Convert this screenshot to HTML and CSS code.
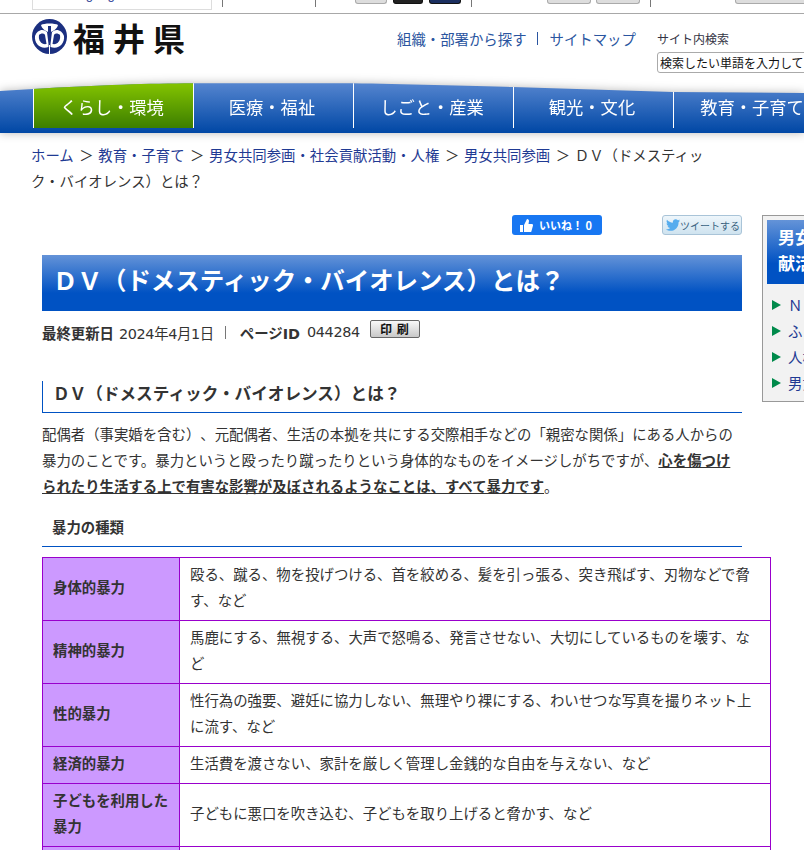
FILE: index.html
```html
<!DOCTYPE html>
<html lang="ja">
<head>
    <meta charset="UTF-8">
    <meta name="viewport" content="width=device-width, initial-scale=1.0">
    <title>DV（ドメスティック・バイオレンス）とは？</title>
    <link rel="stylesheet" href="styles.css">
</head>
<body>
    <div class="topstrip">
        <div class="strip-box"><span class="strip-text">Language</span></div>
        <span class="strip-line sl-1"></span>
        <span class="strip-line sl-2"></span>
        <span class="strip-btn sb-1"></span>
        <span class="strip-btn sb-2"></span>
        <span class="strip-btn sb-3"></span>
        <span class="strip-line sl-3"></span>
        <span class="strip-btn sb-4"></span>
        <span class="strip-btn sb-5"></span>
        <span class="strip-line sl-3"></span>
        <span class="strip-btn sb-6"></span>
    </div>

    <header>
        <a class="logo" href="#">
            <svg width="35" height="35" viewBox="0 0 35 35">
                <circle cx="17.5" cy="17.5" r="17.5" fill="#1b2f80"/>
                <path d="M3 17C5 11 11 9 15 13L16.500 25V28C9 31 2 25 3 17z" fill="#fff"/>
                <path d="M32 17C30 11 24 9 20 13L18.500 25V28C26 31 33 25 32 17z" fill="#fff"/>
                <path d="M7 16C9 14 12 14 13 16L14.500 25C10 26 6 22 7 16z" fill="#1b2f80"/>
                <path d="M28 16C26 14 23 14 22 16L20.500 25C25 26 29 22 28 16z" fill="#1b2f80"/>
                <path d="M9 6C12 4 23 4 26 6C25 10 21 12 19 13V7H16V13C14 12 10 10 9 6z" fill="#fff"/>
                <path d="M17 26h1v9h-1z" fill="#fff"/>
            </svg>
            <span class="logo-text">福井県</span>
        </a>
        <div class="head-right">
            <div class="head-links">
                <a href="#">組織・部署から探す</a>
                <span class="head-sep"></span>
                <a href="#">サイトマップ</a>
            </div>
            <div class="search">
                <label class="search-label">サイト内検索</label>
                <input class="search-input" type="text" value="検索したい単語を入力してください">
            </div>
        </div>
    </header>

    <div class="nav-wrap">
        <nav>
            <a class="nav-item active" href="#">くらし・環境</a>
            <a class="nav-item" href="#">医療・福祉</a>
            <a class="nav-item" href="#">しごと・産業</a>
            <a class="nav-item" href="#">観光・文化</a>
            <a class="nav-item" href="#">教育・子育て</a>
        </nav>
    </div>

    <div class="breadcrumb">
        <a href="#">ホーム</a><span class="crumb-sep">＞</span><a href="#">教育・子育て</a><span class="crumb-sep">＞</span><a href="#">男女共同参画・社会貢献活動・人権</a><span class="crumb-sep">＞</span><a href="#">男女共同参画</a><span class="crumb-sep">＞</span>ＤＶ（ドメスティック・バイオレンス）とは？
    </div>

    <div class="page">
        <main>
            <div class="social">
                <span class="like-btn">
                    <svg width="13" height="13" viewBox="0 0 13 13"><path d="M0 6h3v7H0zM4 6l3-6c1.500 0 2 1 2 2L8.500 5H12c1 0 1 1 1 1.500L11.500 12c0 .6-.5 1-1 1H4z" fill="#fff"/></svg>
                    いいね！ 0
                </span>
                <span class="tweet-btn">
                    <svg width="14" height="12" viewBox="0 0 24 20"><path d="M24 2.400c-.9.400-1.800.7-2.800.8 1-.6 1.800-1.600 2.200-2.700-1 .6-2 1-3.100 1.200C19.300.7 18 0 16.600 0c-2.700 0-4.900 2.200-4.900 4.900 0 .4 0 .8.100 1.100C7.700 5.800 4.100 3.900 1.700.9 1.200 1.600 1 2.500 1 3.400c0 1.700.9 3.200 2.200 4.100-.8 0-1.600-.2-2.200-.6v.1c0 2.400 1.700 4.400 3.900 4.800-.7.200-1.500.2-2.200.1.600 2 2.400 3.400 4.600 3.400-1.700 1.300-3.800 2.100-6.100 2.100-.4 0-.8 0-1.200-.1C2.200 19.200 4.800 20 7.500 20c9.100 0 14-7.500 14-14v-.6c1-.7 1.800-1.600 2.500-3z" fill="#55acee"/></svg>
                    ツイートする
                </span>
            </div>

            <h1 class="page-title">ＤＶ（ドメスティック・バイオレンス）とは？</h1>

            <div class="meta">
                <b>最終更新日</b>
                <span class="meta-num">2024年4月1日</span>
                <span class="meta-sep"></span>
                <b>ページID</b>
                <span class="meta-num meta-id">044284</span>
                <button class="print-btn">印 刷</button>
            </div>

            <h2 class="sec-title">ＤＶ（ドメスティック・バイオレンス）とは？</h2>
            <p class="lead">配偶者（事実婚を含む）、元配偶者、生活の本拠を共にする交際相手などの「親密な関係」にある人からの暴力のことです。暴力というと殴ったり蹴ったりという身体的なものをイメージしがちですが、<strong class="under">心を傷つけられたり生活する上で有害な影響が及ぼされるようなことは、すべて暴力です</strong>。</p>

            <h3 class="sub-title">暴力の種類</h3>

            <table class="dv-table">
                <tr>
                    <th>身体的暴力</th>
                    <td>殴る、蹴る、物を投げつける、首を絞める、髪を引っ張る、突き飛ばす、刃物などで脅す、など</td>
                </tr>
                <tr>
                    <th>精神的暴力</th>
                    <td>馬鹿にする、無視する、大声で怒鳴る、発言させない、大切にしているものを壊す、など</td>
                </tr>
                <tr>
                    <th>性的暴力</th>
                    <td>性行為の強要、避妊に協力しない、無理やり裸にする、わいせつな写真を撮りネット上に流す、など</td>
                </tr>
                <tr>
                    <th>経済的暴力</th>
                    <td>生活費を渡さない、家計を厳しく管理し金銭的な自由を与えない、など</td>
                </tr>
                <tr>
                    <th>子どもを利用した暴力</th>
                    <td>子どもに悪口を吹き込む、子どもを取り上げると脅かす、など</td>
                </tr>
                <tr>
                    <th>社会的暴力</th>
                    <td>友人や家族との付き合いを制限する、など</td>
                </tr>
            </table>
        </main>

        <aside>
            <h2 class="side-title">男女共同参画・社会貢献活動・人権</h2>
            <ul class="side-list">
                <li><a href="#">ＮＰＯ・ボランティア</a></li>
                <li><a href="#">ふくい県民活動</a></li>
                <li><a href="#">人権</a></li>
                <li><a href="#">男女共同参画</a></li>
            </ul>
        </aside>
    </div>
</body>
</html>
```
FILE: styles.css
```css
html {
    overflow: hidden;
}

body {
    margin: 0;
    width: 804px;
    height: 850px;
    overflow: hidden;
    background: #fff;
    color: #333;
    font-family: "Noto Sans CJK JP", "Noto Sans", sans-serif;
    font-size: 14.4px;
    text-spacing-trim: space-all;
}

a {
    color: #1f3a93;
    text-decoration: none;
}

/* top strip, only the bottom edge of it is in view */
.topstrip {
    display: flex;
    align-items: flex-start;
    height: 13px;
    padding-left: 32px;
    border-bottom: 1px solid #a8a8a8;
    overflow: hidden;
}

.strip-box {
    display: flex;
    align-items: flex-end;
    flex: 0 0 180px;
    box-sizing: border-box;
    height: 10px;
    padding-left: 31px;
    border: 1px solid #ddd;
    border-top: none;
}

.strip-text {
    margin-bottom: 6px;
    color: #1f3a93;
    font-family: "Liberation Sans", sans-serif;
    font-size: 13px;
    line-height: 16px;
}

.strip-line {
    flex: 0 0 1px;
    height: 7px;
    background: #777;
}

.sl-1 { margin-left: 10px; }
.sl-2 { margin-left: 92px; }
.sl-3 { margin-left: 10px; }

.strip-btn {
    flex: 0 0 auto;
    box-sizing: border-box;
    height: 4px;
    border: 1px solid #aaa;
    border-top: none;
    border-radius: 0 0 3px 3px;
    background: #ddd;
}

.sb-1 { width: 32px; margin-left: 39px; }
.sb-2 { width: 30px; margin-left: 6px; background: #222; border-color: #111; }
.sb-3 { width: 32px; margin-left: 6px; background: #1b2f60; border-color: #111; }
.sb-4 { width: 44px; margin-left: 75px; }
.sb-5 { width: 44px; margin-left: 5px; }
.sb-6 { width: 80px; margin-left: 84px; }

header {
    height: 69px;
    display: flex;
    justify-content: space-between;
    padding-left: 32px;
}

.logo {
    display: flex;
    align-items: flex-start;
    padding-top: 5px;
    gap: 6px;
    color: #111;
}

.logo-text {
    font-size: 32px;
    line-height: 36px;
    font-weight: 700;
    letter-spacing: 8px;
    color: #111;
}

.head-right {
    display: flex;
    flex: 0 0 407px;
    padding-top: 15px;
    gap: 21px;
}

.head-links {
    display: flex;
    align-items: flex-start;
    gap: 11px;
    line-height: 19px;
    white-space: nowrap;
}

.head-links a {
    color: #2a55a0;
}

.head-sep {
    width: 1px;
    height: 13px;
    margin: 3px 1px 0 -1px;
    background: #2a55a0;
}

.search {
    flex: 0 0 146px;
    min-width: 0;
}

.search-label {
    display: block;
    color: #334;
    font-size: 12px;
    line-height: 20px;
}

.search-input {
    display: block;
    width: 200px;
    height: 21px;
    margin-top: 3px;
    padding: 0 2px;
    box-sizing: border-box;
    border: 1px solid #aaa;
    border-radius: 3px;
    font-family: inherit;
    font-size: 12px;
    color: #111;
}

/* curved top edge comes from the clip-path on nav */
.nav-wrap {
    height: 50px;
    filter: drop-shadow(0 0 5px rgba(0, 0, 0, 0.28));
}

nav {
    display: flex;
    height: 50px;
    box-sizing: border-box;
    padding: 0 0 5px 33px;
    background: linear-gradient(#5585cf, #0047a5);
    clip-path: path("M0 8 L33 6 C100 2 150 .5 193 .3 L353 .3 C400 1 470 3 513 4 L673 9 L804 10 L804 50 L0 50 Z");
    overflow: hidden;
}

.nav-item {
    flex: 0 0 160px;
    box-sizing: border-box;
    padding-right: 3px;
    border-left: 1px solid #fff;
    color: #fff;
    font-size: 17.28px;
    line-height: 48px;
    text-align: center;
    white-space: nowrap;
}

.nav-item.active {
    background: linear-gradient(#84c400, #3c7e00);
}

.breadcrumb {
    margin-top: 9px;
    padding: 0 90px 0 31px;
    line-height: 26px;
}

.crumb-sep {
    margin: 0 4.6px 0 5.5px;
}

.page {
    display: flex;
    gap: 20px;
    padding: 21px 0 0 42px;
}

main {
    flex: 0 0 700px;
    min-width: 0;
}

.social {
    display: flex;
    justify-content: flex-end;
    align-items: center;
    gap: 60px;
    height: 20px;
}

.like-btn {
    display: flex;
    align-items: center;
    gap: 6px;
    width: 90px;
    height: 20px;
    box-sizing: border-box;
    padding-left: 8px;
    background: #1877f2;
    border-radius: 3px;
    color: #fff;
    font-size: 11px;
    font-weight: 700;
}

.tweet-btn {
    display: flex;
    align-items: center;
    width: 80px;
    height: 20px;
    box-sizing: border-box;
    padding-left: 3px;
    border: 1px solid #a9c4d8;
    border-radius: 3px;
    background: linear-gradient(#eef6fb, #cfe3ef);
    color: #39627f;
    font-size: 10px;
    white-space: nowrap;
}

.page-title {
    margin: 20px 0 0;
    padding: 0 11px;
    height: 56px;
    background: linear-gradient(#6493d8, #0052c3 68%);
    color: #fff;
    font-size: 24.48px;
    font-weight: 700;
    line-height: 50px;
    white-space: nowrap;
}

.meta {
    display: flex;
    align-items: center;
    gap: 5px;
    margin-top: 9px;
    height: 24px;
    white-space: nowrap;
}

.meta b {
    font-family: "DejaVu Sans", "Noto Sans CJK JP", sans-serif;
}

.meta-num {
    font-family: "DejaVu Sans", "Noto Sans CJK JP", sans-serif;
    letter-spacing: -0.36px;
}

.meta-id {
    margin-left: 2px;
}

.meta-sep {
    width: 1px;
    height: 13px;
    margin: 0 9px 0 6px;
    background: #777;
}

.print-btn {
    height: 18px;
    width: 50px;
    margin: -6px 0 0 5px;
    padding: 0;
    border: 1px solid #666;
    border-radius: 2px;
    background: linear-gradient(#f8f8f8, #c8c8c8);
    color: #111;
    font-family: inherit;
    font-size: 12px;
    font-weight: 700;
    letter-spacing: 1px;
    line-height: 14px;
}

.sec-title {
    margin: 37px 0 0;
    height: 31px;
    padding-left: 10px;
    border-left: 1px solid #0052c3;
    border-bottom: 1px solid #0052c3;
    font-size: 16.64px;
    font-weight: 700;
    line-height: 24px;
}

.lead {
    margin: 8px 0 0;
    line-height: 26px;
}

.under {
    text-decoration: underline;
}

.sub-title {
    margin: 15px 0 0;
    height: 32px;
    padding-left: 10px;
    border-bottom: 1px solid #0052c3;
    font-size: 14.4px;
    font-weight: 700;
    line-height: 26px;
}

.dv-table {
    width: 729px;
    margin-top: 10px;
    border-collapse: collapse;
}

.dv-table th,
.dv-table td {
    border: 1px solid #9900cc;
    padding: 3px 10px 7px;
    line-height: 26px;
    text-align: left;
}

.dv-table th {
    width: 116px;
    background: #cc99ff;
    font-weight: 700;
}

aside {
    flex: 0 0 210px;
    height: 187px;
    box-sizing: border-box;
    padding: 4px;
    border: 1px solid #999;
    background: #f2f2f2;
}

.side-title {
    margin: 0;
    padding: 4px 11px 0;
    height: 60px;
    background: linear-gradient(#6493d8, #0052c3 68%);
    color: #fff;
    font-size: 17px;
    font-weight: 700;
    line-height: 26px;
}

.side-list {
    list-style: none;
    margin: 8px 0 0;
    padding: 0;
}

.side-list li {
    height: 26px;
    line-height: 26px;
    padding-left: 21px;
    position: relative;
    white-space: nowrap;
}

.side-list li::before {
    content: "";
    position: absolute;
    left: 5px;
    top: 8px;
    border-left: 9px solid #008a4b;
    border-top: 5px solid transparent;
    border-bottom: 5px solid transparent;
}
```
